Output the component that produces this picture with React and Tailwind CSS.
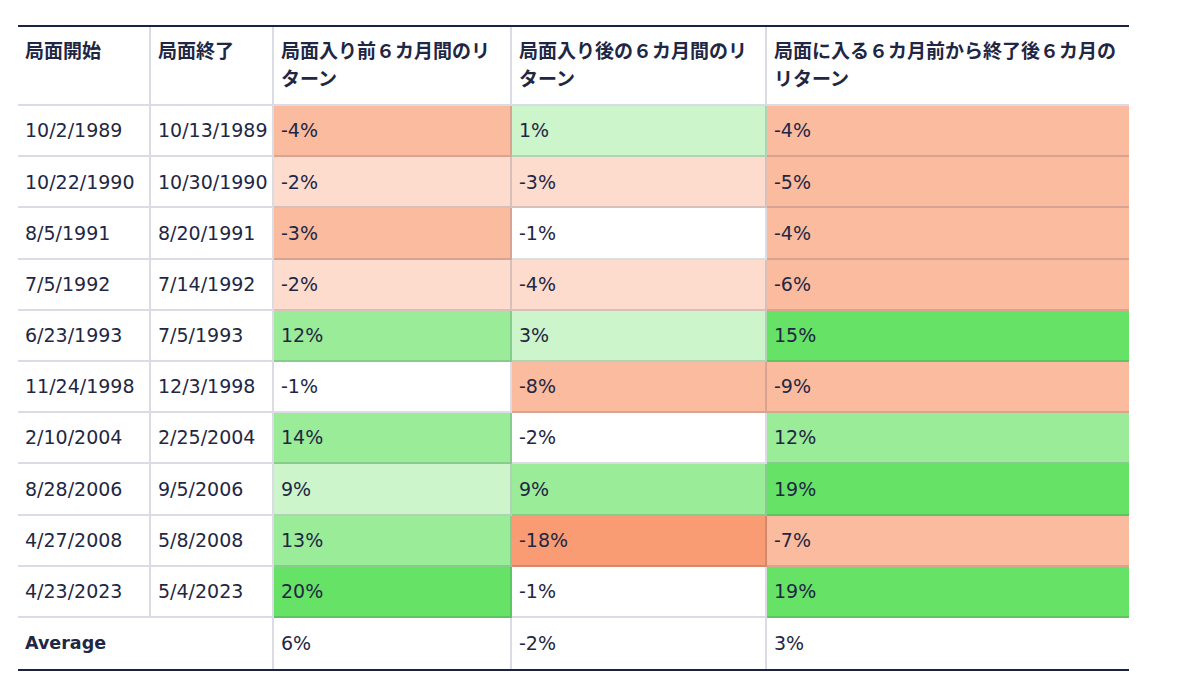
import React from 'react';

const C = {
  w: '',
  p1: 'bg-[#fddcce]',
  p2: 'bg-[#fbbb9f]',
  p3: 'bg-[#f99b73]',
  g1: 'bg-[#ccf5cc]',
  g2: 'bg-[#9aec98]',
  g3: 'bg-[#66e266]',
};

const rows = [
  ['10/2/1989', '10/13/1989', ['-4%', 'p2'], ['1%', 'g1'], ['-4%', 'p2']],
  ['10/22/1990', '10/30/1990', ['-2%', 'p1'], ['-3%', 'p1'], ['-5%', 'p2']],
  ['8/5/1991', '8/20/1991', ['-3%', 'p2'], ['-1%', 'w'], ['-4%', 'p2']],
  ['7/5/1992', '7/14/1992', ['-2%', 'p1'], ['-4%', 'p1'], ['-6%', 'p2']],
  ['6/23/1993', '7/5/1993', ['12%', 'g2'], ['3%', 'g1'], ['15%', 'g3']],
  ['11/24/1998', '12/3/1998', ['-1%', 'w'], ['-8%', 'p2'], ['-9%', 'p2']],
  ['2/10/2004', '2/25/2004', ['14%', 'g2'], ['-2%', 'w'], ['12%', 'g2']],
  ['8/28/2006', '9/5/2006', ['9%', 'g1'], ['9%', 'g2'], ['19%', 'g3']],
  ['4/27/2008', '5/8/2008', ['13%', 'g2'], ['-18%', 'p3'], ['-7%', 'p2']],
  ['4/23/2023', '5/4/2023', ['20%', 'g3'], ['-1%', 'w'], ['19%', 'g3']],
];

const headers = [
  '局面開始',
  '局面終了',
  '局面入り前６カ月間のリターン',
  '局面入り後の６カ月間のリターン',
  '局面に入る６カ月前から終了後６カ月のリターン',
];

const line = 'border-[rgba(40,45,90,0.17)]';

export default function App() {
  return (
    <div
      className="bg-white w-[1200px] h-[697px] pl-[18px] pt-[25px] text-[#1f2744]"
      style={{ fontFamily: '"DejaVu Sans", "Noto Sans CJK JP", sans-serif' }}
    >
      <table className="table-fixed w-[1111px] border-separate border-spacing-0 border-t-2 border-b-2 border-[#1a2340] text-[19px]">
        <colgroup>
          <col className="w-[133px]" />
          <col className="w-[123px]" />
          <col className="w-[238px]" />
          <col className="w-[255px]" />
          <col className="w-[362px]" />
        </colgroup>
        <thead>
          <tr>
            {headers.map((h, i) => (
              <th
                key={h}
                className={`h-[79px] align-top text-left font-bold px-[7px] pt-[10px] leading-[28px] border-b-2 ${line} ${
                  i < 4 ? 'border-r-2' : ''
                }`}
              >
                {h}
              </th>
            ))}
          </tr>
        </thead>
        <tbody>
          {rows.map((r, ri) => (
            <tr key={ri}>
              {r.map((c, ci) => {
                const [text, tone] = Array.isArray(c) ? c : [c, 'w'];
                return (
                  <td
                    key={ci}
                    className={`h-[51.2px] px-[7px] py-0 align-middle whitespace-nowrap border-b-2 ${line} ${C[tone]} ${
                      ci < 4 ? 'border-r-2' : ''
                    }`}
                  >
                    {text}
                  </td>
                );
              })}
            </tr>
          ))}
          <tr>
            <td colSpan={2} className={`h-[51.2px] px-[7px] font-bold text-[17.5px] border-r-2 ${line}`}>
              Average
            </td>
            <td className={`h-[51.2px] px-[7px] border-r-2 ${line}`}>6%</td>
            <td className={`h-[51.2px] px-[7px] border-r-2 ${line}`}>-2%</td>
            <td className="h-[51.2px] px-[7px]">3%</td>
          </tr>
        </tbody>
      </table>
    </div>
  );
}
